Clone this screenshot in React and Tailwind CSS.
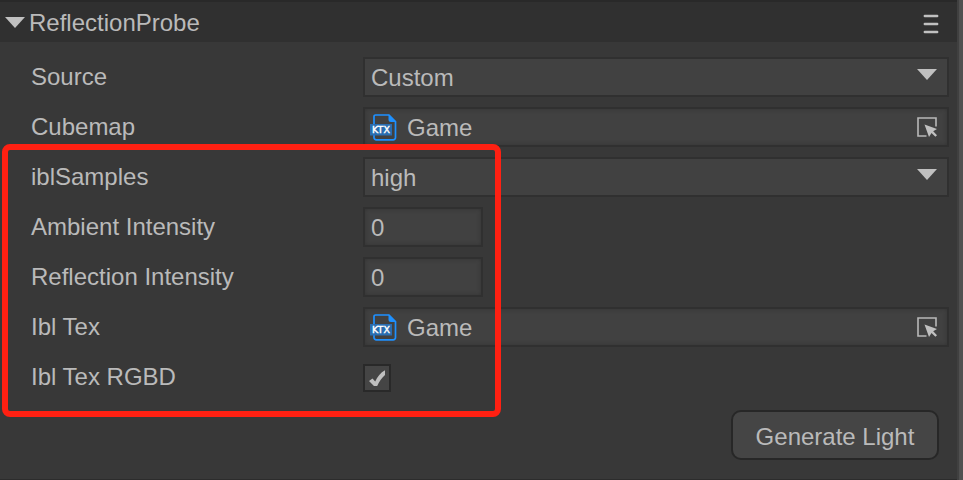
import { useState } from "react";

const fieldFrame = "border-2 border-[#303030] bg-[#414141]";
const insetShade = "shadow-[inset_0_0_4px_#343434]";

function Caret({ className }) {
  return (
    <svg viewBox="0 0 20 11" className={`h-[11px] w-5 shrink-0 ${className || ""}`} aria-hidden="true">
      <path d="M0 0H20L10 11Z" fill="#c0c0c0" />
    </svg>
  );
}

function KtxIcon() {
  return (
    <svg viewBox="0 0 27 27" className="h-[27px] w-[27px] shrink-0" aria-hidden="true">
      <path
        d="M5.5 1H19L25.5 7.5V23.5A2.3 2.3 0 0 1 23.2 25.8H6.3A2.3 2.3 0 0 1 4 23.5V2.5A1.5 1.5 0 0 1 5.5 1Z"
        fill="none"
        stroke="#1e90ff"
        strokeWidth="1.7"
      />
      <path d="M18.5 0.5V5.5A2.5 2.5 0 0 0 21 8H26.3Z" fill="#1e90ff" />
      <rect x="0" y="10" width="22" height="11.5" fill="#2a6db0" />
      <text
        x="11"
        y="19.3"
        textAnchor="middle"
        fontFamily="DejaVu Sans, sans-serif"
        fontSize="9.5"
        stroke="#ffffff"
        strokeWidth="0.4"
        fill="#ffffff"
      >
        KTX
      </text>
    </svg>
  );
}

function PickIcon() {
  return (
    <svg viewBox="0 0 20 20" className="h-5 w-5" aria-hidden="true">
      <path d="M9.5 19H1V1H19V9.5" fill="none" stroke="#b8b8b8" strokeWidth="1.6" />
      <path d="M7.5 7.5L20 12L16.2 14.2L20 18.2L18.4 19.8L14.5 16L12 20Z" fill="#c0c0c0" />
    </svg>
  );
}

function Row({ label, id, children }) {
  return (
    <div className="flex h-10 items-center">
      <label htmlFor={id} className="w-[332px] shrink-0 leading-10">
        {label}
      </label>
      {children}
    </div>
  );
}

function SelectField({ id, options }) {
  return (
    <div className="grid h-10 min-w-0 flex-1">
      <select
        id={id}
        className={`col-start-1 row-start-1 w-full appearance-none rounded-none pt-[2px] pl-[6px] outline-none ${fieldFrame}`}
      >
        {options.map((option) => (
          <option key={option}>{option}</option>
        ))}
      </select>
      <Caret className="pointer-events-none col-start-1 row-start-1 mt-3 mr-3 justify-self-end" />
    </div>
  );
}

function AssetField({ id, name }) {
  return (
    <div className={`flex h-10 min-w-0 flex-1 items-center pr-[10px] pl-[5px] ${fieldFrame} ${insetShade}`}>
      <KtxIcon />
      <input
        id={id}
        readOnly
        defaultValue={name}
        className="ml-[10px] h-9 min-w-0 flex-1 bg-transparent pt-[2px] outline-none"
      />
      <button type="button" aria-label="Pick asset">
        <PickIcon />
      </button>
    </div>
  );
}

function NumberField({ id }) {
  return (
    <input
      id={id}
      defaultValue="0"
      inputMode="decimal"
      className={`h-10 w-[120px] pt-[2px] pl-[6px] outline-none ${fieldFrame} ${insetShade}`}
    />
  );
}

function CheckField({ id }) {
  const [checked, setChecked] = useState(true);
  return (
    <div className="grid pt-[2px]">
      <input
        id={id}
        type="checkbox"
        checked={checked}
        onChange={() => setChecked(!checked)}
        className="col-start-1 row-start-1 h-7 w-7 appearance-none border-2 border-[#292929] bg-[#454545]"
      />
      {checked && (
        <svg
          viewBox="0 0 28 28"
          className="pointer-events-none col-start-1 row-start-1 h-7 w-7"
          aria-hidden="true"
        >
          <path d="M6 17L9.5 14.5L12.2 17.5C14.5 12.5 17.5 8.5 22 6.2V11C19 13.5 16.2 17.5 14.2 22H11Z" fill="#c0c0c0" />
        </svg>
      )}
    </div>
  );
}

export default function App() {
  const [open, setOpen] = useState(true);
  return (
    <div className="flex min-h-screen bg-[#383838] font-['Liberation_Sans',Arial,sans-serif] text-2xl text-[#bababa]">
      <main className="min-w-0 flex-1 border-t-2 border-b border-t-[#292929] border-b-[#2c2c2c]">
        <header className="flex h-10 items-center justify-between bg-[#303030] pr-[18px] pl-[5px]">
          <button type="button" onClick={() => setOpen(!open)} className="flex items-center gap-1 leading-10">
            <Caret />
            <span className="pt-[2px]">ReflectionProbe</span>
          </button>
          <button type="button" aria-label="Component menu" className="mt-1">
            <svg viewBox="0 0 16 20" className="h-5 w-4" aria-hidden="true">
              <path d="M1.8 2H14.2M1.8 10H14.2M1.8 18H14.2" stroke="#c0c0c0" strokeWidth="2.4" strokeLinecap="round" />
            </svg>
          </button>
        </header>

        {open && (
          <section>
            <div className="flex flex-col gap-[10px] pt-[15px] pr-2 pl-[31px]">
              <Row label="Source" id="source">
                <SelectField id="source" options={["Custom", "Skybox"]} />
              </Row>
              <Row label="Cubemap" id="cubemap">
                <AssetField id="cubemap" name="Game" />
              </Row>
            </div>

            <div className="relative mt-[10px] flex flex-col gap-[10px] pr-2 pl-[31px]">
              <Row label="iblSamples" id="samples">
                <SelectField id="samples" options={["high", "medium", "low"]} />
              </Row>
              <Row label="Ambient Intensity" id="ambient">
                <NumberField id="ambient" />
              </Row>
              <Row label="Reflection Intensity" id="reflection">
                <NumberField id="reflection" />
              </Row>
              <Row label="Ibl Tex" id="ibltex">
                <AssetField id="ibltex" name="Game" />
              </Row>
              <Row label="Ibl Tex RGBD" id="rgbd">
                <CheckField id="rgbd" />
              </Row>
              <div className="pointer-events-none absolute -top-[13px] -bottom-5 left-[2px] w-[499px] rounded-lg border-[6px] border-[#ff2012]" />
            </div>

            <div className="flex justify-end pt-[13px] pr-[18px] pb-[18px]">
              <button
                type="button"
                className="h-[50px] min-w-52 rounded-[10px] border-2 border-[#272727] bg-[#454545] px-5 pt-[3px]"
              >
                Generate Light
              </button>
            </div>
          </section>
        )}
      </main>
      <div className="w-[6px] shrink-0 border-l-2 border-[#404040] bg-[#505050]" />
    </div>
  );
}
